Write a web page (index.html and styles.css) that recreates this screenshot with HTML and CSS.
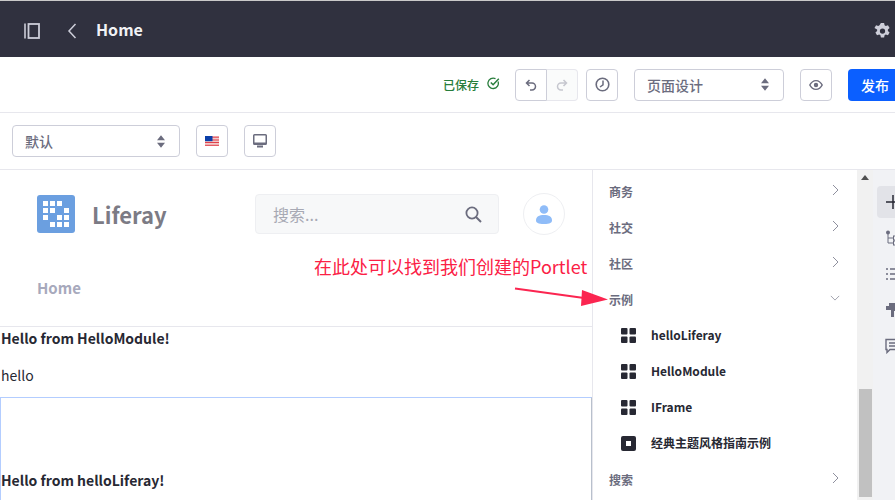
FILE: index.html
```html
<!DOCTYPE html>
<html lang="zh">
<head>
<meta charset="utf-8">
<title>Home</title>
<link rel="stylesheet" href="styles.css">
</head>
<body>
<div class="page">
  <header class="topbar">
    <svg class="ic-sidebar" width="16" height="16" viewBox="0 0 16 16"><path d="M1 0.500v15" stroke="#cdced9" stroke-width="1.600" fill="none"/><rect x="4.500" y="1" width="10.500" height="14" stroke="#cdced9" stroke-width="1.800" fill="none"/></svg>
    <svg class="ic-back" width="10" height="16" viewBox="0 0 10 16"><path d="M8.500 1L2 8l6.500 7" stroke="#cdced9" stroke-width="1.500" fill="none"/></svg>
    <span class="top-title">Home</span>
    <svg class="ic-gear" width="17" height="17" viewBox="0 0 18 18"><path fill-rule="evenodd" fill="#cdced9" d="M7.300 0h3.400l.5 2.400 1.300.7 2.300-.8 1.700 3-1.800 1.600v1.500l1.800 1.600-1.700 3-2.300-.8-1.300.7-.5 2.400H7.300l-.5-2.400-1.300-.7-2.300.8-1.700-3 1.800-1.600V6.900L.5 5.300l1.700-3 2.300.8 1.300-.7zM9 5.700a2.800 2.800 0 1 0 0 5.600 2.800 2.800 0 0 0 0-5.600z"/></svg>
  </header>

  <div class="bar bar-main">
    <span class="saved">已保存</span>
    <svg class="ic-check" width="13" height="13" viewBox="0 0 13 13"><path d="M11 4.500A5.200 5.200 0 1 1 8.500 1.700" stroke="#287d3c" stroke-width="1.300" fill="none"/><path d="M3.800 5.500l2.300 2.300 5.700-6" stroke="#287d3c" stroke-width="1.500" fill="none"/></svg>
    <div class="btn-group">
      <button class="btn btn-join"><svg width="12" height="12" viewBox="0 0 12 12"><path d="M4.500 1L1.500 4l3 3M1.500 4h5.500a3.500 3.500 0 0 1 0 7H5" stroke="#6b6c7e" stroke-width="1.500" fill="none"/></svg></button>
      <button class="btn btn-join-end"><svg width="12" height="12" viewBox="0 0 12 12"><path d="M7.500 1l3 3-3 3M10.500 4H5a3.500 3.500 0 0 0 0 7h2" stroke="#c6c7cf" stroke-width="1.500" fill="none"/></svg></button>
    </div>
    <button class="btn btn-history"><svg width="15" height="15" viewBox="0 0 15 15"><circle cx="7.500" cy="7.500" r="6.300" stroke="#6b6c7e" stroke-width="1.600" fill="none"/><path d="M8 3.500v4.300L5 10" stroke="#6b6c7e" stroke-width="1.500" fill="none"/></svg></button>
    <div class="select select-mode"><span>页面设计</span><svg class="updown" width="8" height="13" viewBox="0 0 9 14"><path d="M4.500 0L9 5.500H0zM4.500 14L0 8.500h9z" fill="#6b6c7e"/></svg></div>
    <button class="btn btn-eye"><svg width="14" height="10" viewBox="0 0 14 10"><path fill-rule="evenodd" fill="#6b6c7e" d="M7 0c3 0 5.500 2 7 5-1.500 3-4 5-7 5S1.500 8 0 5c1.500-3 4-5 7-5zm0 1.300C4.700 1.300 2.900 2.700 1.600 5c1.300 2.300 3.100 3.700 5.400 3.700S11.100 7.300 12.400 5C11.100 2.700 9.300 1.300 7 1.300zM7 2.800a2.200 2.200 0 1 1 0 4.400 2.200 2.200 0 0 1 0-4.400z"/></svg></button>
    <button class="btn-publish">发布</button>
  </div>

  <div class="bar bar-sub">
    <div class="select select-exp"><span>默认</span><svg class="updown" width="8" height="13" viewBox="0 0 9 14"><path d="M4.500 0L9 5.500H0zM4.500 14L0 8.500h9z" fill="#6b6c7e"/></svg></div>
    <button class="btn btn-flag">
      <svg width="14" height="10" viewBox="0 0 14 10"><rect width="14" height="10" fill="#f3c9c9"/><path d="M0 4h14M0 6.500h14M0 9.300h14M7 1.200h7" stroke="#e0414b" stroke-width="1"/><rect width="7.500" height="5.200" fill="#0b3fa8"/></svg>
    </button>
    <button class="btn btn-device"><svg width="14" height="14" viewBox="0 0 14 14"><path fill-rule="evenodd" fill="#6b6c7e" d="M1.500 0h11A1.500 1.500 0 0 1 14 1.500v8a1.500 1.500 0 0 1-1.500 1.500h-11A1.500 1.500 0 0 1 0 9.500v-8A1.500 1.500 0 0 1 1.500 0zM1.500 1.500v7h11v-7z"/><rect x="4" y="11.500" width="6" height="2" fill="#6b6c7e"/></svg></button>
  </div>

  <div class="workspace">
    <main class="canvas">
      <div class="site-head">
        <div class="site-row">
          <svg class="logo" width="38" height="38" viewBox="0 0 38 38"><rect width="38" height="38" rx="3" fill="#6b9fe0"/><g fill="#fff"><rect x="6" y="6" width="5" height="5"/><rect x="13" y="6" width="5" height="5"/><rect x="20" y="6" width="5" height="5"/><rect x="6" y="13" width="5" height="5"/><rect x="13" y="13" width="5" height="5"/><rect x="27" y="13" width="5" height="5"/><rect x="6" y="20" width="5" height="5"/><rect x="20" y="20" width="5" height="5"/><rect x="27" y="20" width="5" height="5"/><rect x="13" y="27" width="5" height="5"/><rect x="20" y="27" width="5" height="5"/><rect x="27" y="27" width="5" height="5"/></g></svg>
          <span class="site-name">Liferay</span>
          <div class="search"><span>搜索...</span><svg width="17" height="17" viewBox="0 0 17 17"><circle cx="7" cy="7" r="5.600" stroke="#6b6c7e" stroke-width="1.800" fill="none"/><path d="M11 11l5 5" stroke="#6b6c7e" stroke-width="2" fill="none"/></svg></div>
          <div class="avatar"><svg width="16" height="19" viewBox="0 0 16 19"><circle cx="8" cy="4.500" r="4.300" fill="#8fbcf8"/><path d="M0 15.500C0 11.500 3 10 8 10s8 1.500 8 5.500c0 2-2 3.500-8 3.500s-8-1.500-8-3.500z" fill="#8fbcf8"/></svg></div>
        </div>
        <nav class="site-nav">Home</nav>
      </div>
      <section class="portlet-a">
        <p class="strong">Hello from HelloModule!</p>
        <p class="plain">hello</p>
      </section>
      <section class="portlet-b">
        <p class="strong">Hello from helloLiferay!</p>
      </section>
    </main>

    <aside class="panel">
      <div class="row cat"><span>商务</span><svg class="chev" width="7" height="12" viewBox="0 0 7 12"><path d="M1 1l5 5-5 5" stroke="#8f909e" fill="none"/></svg></div>
      <div class="row cat"><span>社交</span><svg class="chev" width="7" height="12" viewBox="0 0 7 12"><path d="M1 1l5 5-5 5" stroke="#8f909e" fill="none"/></svg></div>
      <div class="row cat"><span>社区</span><svg class="chev" width="7" height="12" viewBox="0 0 7 12"><path d="M1 1l5 5-5 5" stroke="#8f909e" fill="none"/></svg></div>
      <div class="row cat"><span>示例</span><svg class="chev-d" width="10" height="6" viewBox="0 0 12 7"><path d="M1 1l5 5 5-5" stroke="#8f909e" fill="none"/></svg></div>
      <div class="row item"><svg width="15" height="15" viewBox="0 0 15 15"><g fill="#272833"><rect width="6.500" height="6.500" rx="1"/><rect x="8.500" width="6.500" height="6.500" rx="1"/><rect y="8.500" width="6.500" height="6.500" rx="1"/><rect x="8.500" y="8.500" width="6.500" height="6.500" rx="1"/></g></svg><span>helloLiferay</span></div>
      <div class="row item"><svg width="15" height="15" viewBox="0 0 15 15"><g fill="#272833"><rect width="6.500" height="6.500" rx="1"/><rect x="8.500" width="6.500" height="6.500" rx="1"/><rect y="8.500" width="6.500" height="6.500" rx="1"/><rect x="8.500" y="8.500" width="6.500" height="6.500" rx="1"/></g></svg><span>HelloModule</span></div>
      <div class="row item"><svg width="15" height="15" viewBox="0 0 15 15"><g fill="#272833"><rect width="6.500" height="6.500" rx="1"/><rect x="8.500" width="6.500" height="6.500" rx="1"/><rect y="8.500" width="6.500" height="6.500" rx="1"/><rect x="8.500" y="8.500" width="6.500" height="6.500" rx="1"/></g></svg><span>IFrame</span></div>
      <div class="row item"><svg width="15" height="15" viewBox="0 0 15 15"><rect width="15" height="15" rx="2" fill="#272833"/><rect x="5" y="5" width="5" height="5" fill="#fff"/></svg><span>经典主题风格指南示例</span></div>
      <div class="row cat"><span>搜索</span><svg class="chev" width="7" height="12" viewBox="0 0 7 12"><path d="M1 1l5 5-5 5" stroke="#8f909e" fill="none"/></svg></div>
    </aside>

    <div class="scroll">
      <svg class="scroll-up" width="8" height="5" viewBox="0 0 8 5"><path d="M4 0l4 5H0z" fill="#505050"/></svg>
      <div class="scroll-thumb"></div>
    </div>

    <div class="rail">
      <div class="rail-btn rail-active"><svg width="16" height="16" viewBox="0 0 16 16"><path d="M8 1v14M1 8h14" stroke="#272833" stroke-width="1.500" fill="none"/></svg></div>
      <div class="rail-btn"><svg width="16" height="16" viewBox="0 0 16 16"><circle cx="3" cy="2.500" r="2" fill="#6b6c7e"/><path d="M3 4v9h5M3 8h5" stroke="#6b6c7e" fill="none"/><rect x="8.500" y="6" width="5" height="4" stroke="#6b6c7e" fill="none"/><rect x="8.500" y="11" width="5" height="4" stroke="#6b6c7e" fill="none"/></svg></div>
      <div class="rail-btn"><svg width="16" height="16" viewBox="0 0 16 16"><path d="M1 3h2M5 3h11M1 8h2M5 8h11M1 13h2M5 13h11" stroke="#6b6c7e" stroke-width="1.500" fill="none"/></svg></div>
      <div class="rail-btn"><svg width="16" height="16" viewBox="0 0 16 16"><path d="M4 1h12v8H9v6H6V8H1V4h3z" fill="#6b6c7e"/></svg></div>
      <div class="rail-btn"><svg width="16" height="16" viewBox="0 0 16 16"><path d="M1 1.500h14v10H5l-3 3v-3H1zM4 5h9M4 8h9" stroke="#6b6c7e" stroke-width="1.400" fill="none"/></svg></div>
    </div>

    <div class="note">在此处可以找到我们创建的Portlet</div>
    <svg class="note-arrow" width="95" height="22" viewBox="0 0 95 22"><path d="M1 1.500L70 11" stroke="#fb2550" stroke-width="2.200" fill="none"/><path d="M68 3l26 9.500L67 19z" fill="#fb2550"/></svg>
  </div>
</div>
</body>
</html>
```

FILE: styles.css
```css
* { box-sizing: border-box; }
html, body { margin: 0; height: 100%; }
body { font-family: "Noto Sans CJK SC", "Noto Sans", sans-serif; background: #fff; overflow: hidden; }
p { margin: 0; }
button { padding: 0; font: inherit; background: #fff; cursor: pointer; }
svg { display: block; flex: none; }

.page { width: 895px; height: 500px; overflow: hidden; display: flex; flex-direction: column; }

.topbar { height: 57px; flex: none; border-top: 1px solid #c9c9c9; background: #30313f; display: flex; align-items: center; padding-left: 24px; }
.ic-sidebar { margin-top: 4px; }
.ic-back { margin: 4px 0 0 27px; }
.top-title { margin-left: 19px; color: #f1f2f5; font-size: 16px; font-weight: 700; }
.ic-gear { margin: 4px 4px 0 auto; }

.bar { flex: none; display: flex; align-items: center; background: #fff; border-bottom: 1px solid #e7e7ed; }
.bar-main { height: 56px; padding-left: 443px; }
.bar-sub { height: 57px; padding-left: 12px; }

.saved { color: #287d3c; font-size: 12px; font-weight: 500; white-space: nowrap; flex: none; width: 37px; }
.ic-check { margin-left: 7px; margin-top: -3px; }

.btn { width: 32px; height: 32px; flex: none; border: 1px solid #cdced9; border-radius: 4px; display: flex; align-items: center; justify-content: center; }
.btn-group { display: flex; flex: none; margin-left: 15px; }
.btn-join { border-radius: 4px 0 0 4px; }
.btn-join-end { width: 31px; border-left: 0; border-color: #e7e7ed; border-radius: 0 4px 4px 0; background: #fafbfb; }
.btn-history { margin-left: 8px; }
.btn-eye { margin-left: 16px; }
.btn-flag { margin-left: 16px; }
.btn-device { margin-left: 16px; }

.select { height: 32px; flex: none; border: 1px solid #cdced9; border-radius: 4px; display: flex; align-items: center; justify-content: space-between; color: #6b6c7e; font-size: 14px; font-weight: 500; padding: 0 14px 0 12px; }
.select-mode { width: 150px; margin-left: 16px; }
.select-exp { width: 168px; }

.btn-publish { width: 60px; height: 32px; margin-left: 16px; flex: none; border: 0; border-radius: 4px; background: #0b5fff; color: #fff; font-size: 14px; font-weight: 500; text-align: left; padding-left: 13px; }

.workspace { position: relative; flex: 1; min-height: 0; display: flex; }

.canvas { width: 592px; flex: none; overflow: hidden; }
.site-head { height: 157px; border-bottom: 1px solid #e7e7ed; padding: 25px 0 0 37px; }
.site-row { display: flex; align-items: center; height: 38px; }
.logo { flex: none; }
.site-name { margin-left: 17px; color: #7c7b85; font-size: 22px; font-weight: 700; line-height: 1; width: 163px; flex: none; }
.search { width: 244px; height: 40px; flex: none; background: #f7f8f9; border: 1px solid #eeeff2; border-radius: 4px; display: flex; align-items: center; justify-content: space-between; padding: 0 16px 0 17px; color: #a7a9b4; font-size: 16px; }
.avatar { width: 42px; height: 42px; flex: none; margin-left: 24px; border: 1px solid #eeeff2; border-radius: 50%; display: flex; align-items: center; justify-content: center; }
.site-nav { margin-top: 44px; color: #a7a9bc; font-size: 15px; font-weight: 700; line-height: 22px; }

.portlet-a { padding-left: 1px; height: 71px; color: #272833; font-size: 14px; }
.strong { font-weight: 700; line-height: 22px; height: 23px; color: #272833; font-size: 14px; }
.plain { margin-top: 14px; line-height: 22px; font-weight: 400; }
.portlet-b { height: 120px; margin-top: -1px; border: 1px solid #b8c0cc; border-left-color: #b3cdff; border-top-color: #b3cdff; padding: 71px 0 0 0; }

.panel { width: 265px; flex: none; border-left: 1px solid #e7e7ed; background: #fff; padding-top: 3px; overflow: hidden; }
.row { height: 36px; display: flex; align-items: center; }
.cat { padding: 0 18px 0 16px; justify-content: space-between; color: #6b6c7e; font-size: 12px; font-weight: 700; }
.chev-d { margin: -2px -1px 0 0; }
.chev { margin-top: -2px; }
.item { padding-left: 28px; gap: 15px; color: #272833; font-size: 12px; font-weight: 700; }
.item span { margin-top: -2px; }

.scroll { width: 16px; flex: none; background: #f1f1f1; display: flex; flex-direction: column; align-items: center; padding-top: 5px; }
.scroll-thumb { width: 13px; height: 108px; margin-top: 209px; background: #c1c1c1; }

.rail { width: 22px; flex: none; background: #f1f2f5; padding: 16px 0 0 4px; display: flex; flex-direction: column; gap: 4px; }
.rail-btn { width: 32px; height: 32px; flex: none; border-radius: 4px; display: flex; align-items: center; justify-content: center; }
.rail-active { background: #e2e3e8; }

.note { position: absolute; left: 314px; top: 83px; color: #fb2045; font-size: 18px; font-weight: 400; line-height: 26px; white-space: nowrap; }
.note-arrow { position: absolute; left: 514px; top: 117px; }
```
